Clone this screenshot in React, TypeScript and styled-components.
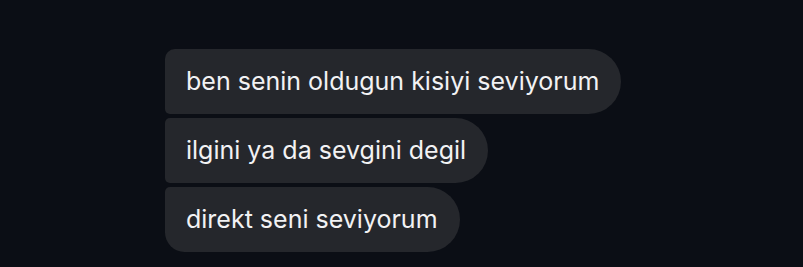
import React from 'react';
import styled, { createGlobalStyle } from 'styled-components';

const GlobalStyle = createGlobalStyle`
  html, body {
    margin: 0;
    padding: 0;
    background: #0b0e15;
  }
`;

const Screen = styled.div`
  width: 803px;
  height: 267px;
  box-sizing: border-box;
  padding: 49px 0 0 165px;
  background: #0b0e15;
  overflow: hidden;
`;

const Thread = styled.div`
  display: flex;
  flex-direction: column;
  align-items: flex-start;
  gap: 4px;
`;

const Bubble = styled.div<{ $first?: boolean; $last?: boolean }>`
  display: flex;
  align-items: center;
  height: 65px;
  box-sizing: border-box;
  padding: 0 22px 1px 21px;
  background: #25272c;
  color: #f2f2f4;
  font-family: Inter, 'Noto Sans', sans-serif;
  font-size: 25px;
  white-space: nowrap;
  border-radius: 33px;
  border-top-left-radius: ${(p) => (p.$first ? '10px' : '5px')};
  border-bottom-left-radius: ${(p) => (p.$last ? '20px' : '5px')};
`;

const MESSAGES = [
  'ben senin oldugun kisiyi seviyorum',
  'ilgini ya da sevgini degil',
  'direkt seni seviyorum',
];

const App = () => (
  <Screen>
    <GlobalStyle />
    <Thread>
      {MESSAGES.map((m, i) => (
        <Bubble key={m} $first={i === 0} $last={i === MESSAGES.length - 1}>
          {m}
        </Bubble>
      ))}
    </Thread>
  </Screen>
);

export default App;
